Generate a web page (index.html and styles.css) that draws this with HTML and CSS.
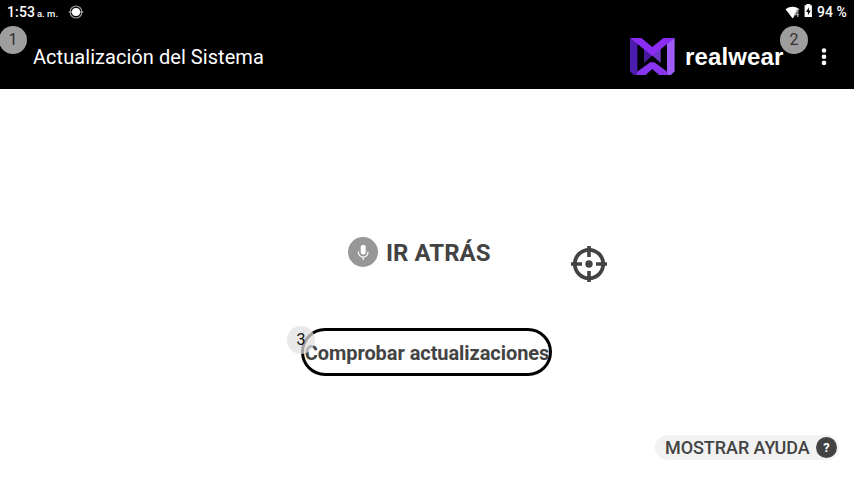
FILE: index.html
```html
<!DOCTYPE html>
<html lang="es">
<head>
<meta charset="utf-8">
<title>Actualización del Sistema</title>
<link rel="stylesheet" href="styles.css">
</head>
<body>
<div class="screen">
  <div class="status">
    <span class="clock">1:53</span><span class="ampm">a. m.</span>
    <svg class="rec" width="16" height="16" viewBox="0 0 16 16"><circle cx="8" cy="8" r="5.9" fill="none" stroke="#8c8c8c" stroke-width="1.3"/><path d="M.8 8h14.4" stroke="#aaa" stroke-width="1.3"/><circle cx="8" cy="8" r="4.1" fill="#fff"/></svg>
    <span class="spacer"></span>
    <svg class="wifi" width="16" height="14" viewBox="0 0 16 14"><path d="M.5 3.2Q7.5-1.6 14.5 3.2L13.6 4.5 8.4 12 7.5 12.2Z" fill="#fff"/><path d="M14.5 3.5v8.5H8l4-8.5Z" fill="#000" opacity=".65"/><path d="M12.6 4 10.1 8.7h3.7M12.8 4v7.2" fill="none" stroke="#bbb" stroke-width="1"/></svg>
    <svg class="battery" width="9" height="14" viewBox="0 0 9 14"><path d="M2.4 0h3.9v1.2h1.6v11.9H.6V1.2h1.8Z" fill="#fff"/><path d="M4.9 3.3 2 8h1.9v3.2L6.8 6.5H4.9Z" fill="#000"/></svg>
    <span class="percent">94 %</span>
  </div>
  <header class="bar">
    <h1 class="title">Actualización del Sistema</h1>
    <div class="brand">
      <svg class="logo" width="45" height="38" viewBox="0 0 45 38">
        <path d="M0 0 7.4 5.5V32L7.2 37H4L0 33.4Z" fill="#4c1cb0"/>
        <path d="M44.6 0 37 5.5V32L37.2 37h3.6l3.8-3.6Z" fill="#a05cfa"/>
        <path d="M14 10.5 22.3 17.4 14 25Z" fill="#481aa0"/>
        <path d="M30.7 10.5 22.3 17.4l8.4 7.6Z" fill="#7136c9"/>
        <path d="M0 0h11.4l10.9 8.9L33.3 0h11.3L22.3 18Z" fill="#8b2cf5"/>
        <path d="M6.5 37 7.4 33.4 20.3 24.3h4L37 33.4 38.2 37H29l-6.7-6L15.7 37Z" fill="#8735ee"/>
      </svg>
      <span class="wordmark">realwear</span>
    </div>
    <svg class="more" width="6" height="18" viewBox="0 0 6 18" fill="#fff"><circle cx="3" cy="2.5" r="2.3"/><circle cx="3" cy="8.7" r="2.3"/><circle cx="3" cy="14.9" r="2.3"/></svg>
    <span class="badge badge-one">1</span>
    <span class="badge badge-two">2</span>
  </header>
  <main class="content">
    <div class="back">
      <svg class="mic" width="30" height="30" viewBox="0 0 30 30"><circle cx="15" cy="15" r="15" fill="#979797"/><rect x="12.7" y="7.8" width="5" height="9.8" rx="2.5" fill="#fff"/><path d="M10.4 14.5v.8a4.8 4.8 0 0 0 9.6 0v-.8M15.2 20v3" fill="none" stroke="#fff" stroke-width="1.2"/></svg>
      <span class="back-label">IR ATRÁS</span>
      <svg class="target" width="36" height="36" viewBox="0 0 36 36"><circle cx="18" cy="18" r="14.2" fill="none" stroke="#434343" stroke-width="3.8"/><path d="M18 0v11M18 25v11M0 18h11M25 18h11" stroke="#434343" stroke-width="3.6"/><circle cx="18" cy="18" r="3.7" fill="#434343"/></svg>
    </div>
    <div class="check"><span class="check-label">Comprobar actualizaciones</span><span class="badge badge-three">3</span></div>
    <div class="help"><span class="help-label">MOSTRAR AYUDA</span><span class="question">?</span></div>
  </main>
</div>
</body>
</html>
```

FILE: styles.css
```css
* { box-sizing: border-box; }
body { margin: 0; background: #fff; font-family: Roboto, sans-serif; color: #434343; }
.screen { width: 854px; height: 480px; overflow: hidden; white-space: nowrap; }
.status { height: 25px; background: #000; color: #fff; display: flex; align-items: flex-start; padding: 0 8px 0 7px; font-weight: 500; }
.clock { font-size: 14px; line-height: 25px; width: 28px; letter-spacing: .15px; }
.ampm { font-size: 9.5px; line-height: 28px; margin-left: 2px; width: 22px; }
.rec { margin: 4px 0 0 9px; }
.spacer { flex: 1; }
.wifi { margin-top: 6px; }
.battery { margin: 4px 4px 0 3px; }
.percent { font-size: 14px; line-height: 25px; width: 29px; }
.bar { position: relative; height: 64px; background: #000; color: #fff; display: flex; align-items: flex-start; padding-left: 33px; }
.title { margin: 0; font-size: 20px; font-weight: 400; line-height: 64px; width: 597px; letter-spacing: .05px; }
.brand { display: flex; width: 155px; }
.logo { margin-top: 13px; flex: none; }
.wordmark { font: bold 24px/64px "Liberation Sans", sans-serif; margin-left: 10px; letter-spacing: .15px; }
.more { margin: 23px 0 0 36px; }
.badge { position: absolute; width: 28px; height: 28px; border-radius: 50%; background: #9e9e9e; color: #303030; font-size: 16px; font-weight: 400; line-height: 28px; text-align: center; }
.badge-one { left: -1px; top: 1px; }
.badge-two { left: 780px; top: 1px; }
.badge-three { left: -17px; top: -5px; background: rgba(224, 224, 224, .72); color: #111; }
.content { height: 391px; display: flex; flex-direction: column; }
.back { display: flex; align-items: flex-start; margin: 148px 0 0 348px; height: 91px; }
.back-label { font-size: 24px; font-weight: 700; line-height: 32px; margin-left: 8px; width: 105px; letter-spacing: .05px; }
.target { margin: 9px 0 0 80px; }
.check { position: relative; width: 251px; height: 48px; margin-left: 301px; border: 3px solid #000; border-radius: 24px; display: flex; justify-content: center; }
.check-label { font-size: 20px; font-weight: 700; line-height: 45px; letter-spacing: -.06px; margin-left: 1px; }
.help { margin: 59px 0 0 655px; width: 184px; height: 25px; border-radius: 13px; background: #f2f2f2; display: flex; align-items: center; padding-left: 10px; }
.help-label { font-size: 18px; font-weight: 500; line-height: 25px; width: 145px; letter-spacing: -.06px; }
.question { margin-left: 6px; width: 21px; height: 21px; border-radius: 50%; background: #434343; color: #fff; font-size: 13px; font-weight: 700; line-height: 21px; text-align: center; }
```
